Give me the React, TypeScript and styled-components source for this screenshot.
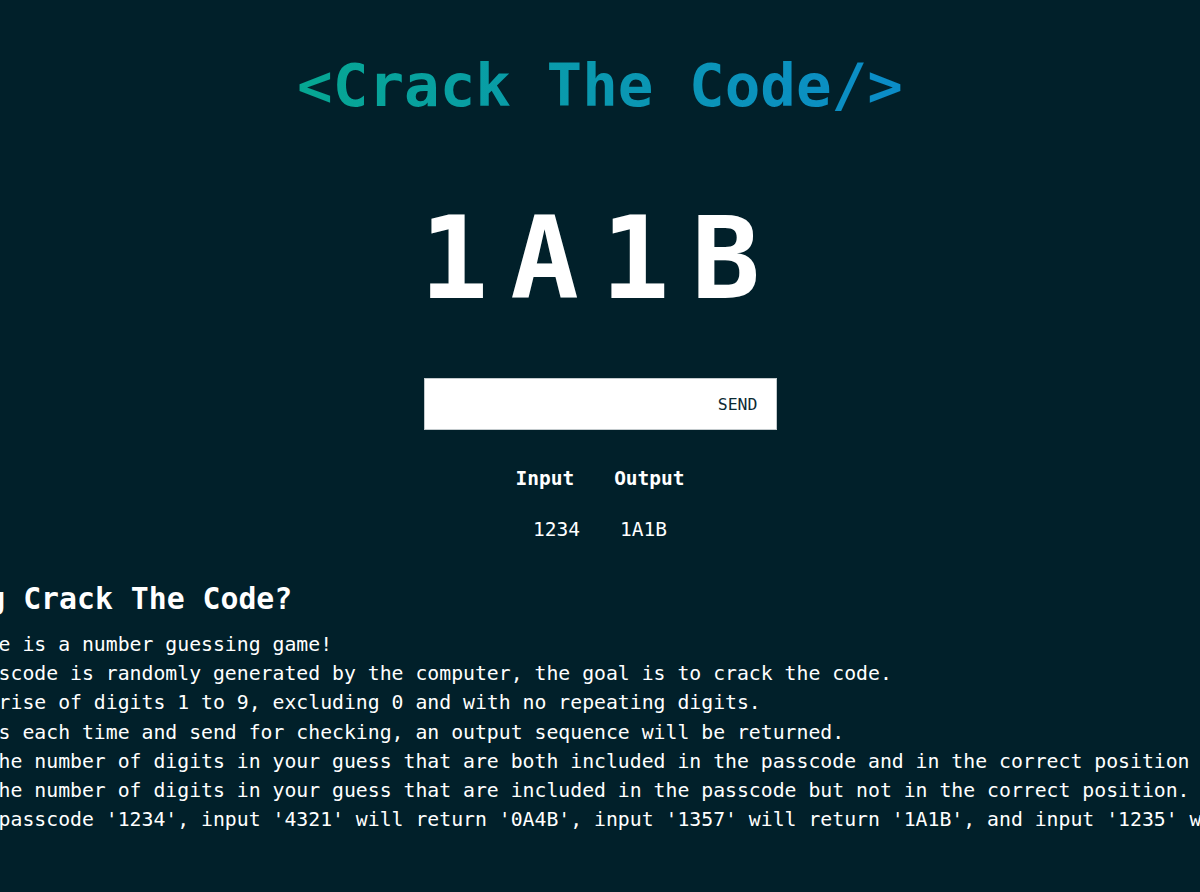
import React, { useState } from "react";
import styled, { createGlobalStyle } from "styled-components";

const GlobalStyle = createGlobalStyle`
  html, body {
    margin: 0;
    padding: 0;
    background: #01202a;
    overflow: hidden;
  }
  body {
    font-family: "DejaVu Sans Mono", "Liberation Mono", monospace;
    color: #ffffff;
  }
`;

const Page = styled.main`
  display: flex;
  flex-direction: column;
  align-items: center;
  padding-top: 51px;
  min-height: 892px;
  box-sizing: border-box;
`;

const Title = styled.h1`
  margin: 0;
  font-size: 59.2px;
  line-height: 70px;
  font-weight: 700;
  background: linear-gradient(90deg, #06a792 0%, #0a98b0 50%, #0b8cc8 100%);
  -webkit-background-clip: text;
  background-clip: text;
  color: transparent;
  white-space: nowrap;
`;

const Result = styled.div`
  margin-top: 81px;
  padding-left: 2px;
  font-size: 114px;
  line-height: 1;
  font-weight: 700;
  letter-spacing: 22px;
  color: #ffffff;
`;

const Form = styled.form`
  margin-top: 62px;
  display: flex;
  width: 353px;
  height: 52px;
  box-sizing: border-box;
  background: #ffffff;
  border: 1px solid #c3cacd;
`;

const Field = styled.input`
  flex: 1;
  min-width: 0;
  border: none;
  outline: none;
  background: transparent;
  padding: 0 14px;
  font-family: inherit;
  font-size: 17px;
  color: #01202a;
`;

const SendButton = styled.button`
  border: none;
  background: transparent;
  padding: 0 18px 0 10px;
  font-family: inherit;
  font-size: 16.5px;
  color: #0c2a33;
  cursor: pointer;
`;

const History = styled.div`
  margin-top: 34px;
  display: flex;
  flex-direction: column;
  align-items: center;
  gap: 21px;
`;

const HistoryRow = styled.div<{ $head?: boolean }>`
  display: flex;
  gap: 40px;
  font-size: 19.5px;
  line-height: 30px;
  font-weight: ${(p) => (p.$head ? 700 : 400)};
`;

const Rules = styled.section`
  margin-top: 36px;
  width: max-content;
  white-space: nowrap;
`;

const RulesHeading = styled.h2`
  margin: 0;
  font-size: 29.8px;
  line-height: 36px;
  font-weight: 700;
`;

const RuleList = styled.div`
  margin-top: 13px;
  display: flex;
  flex-direction: column;
`;

const Rule = styled.p`
  margin: 0;
  font-size: 19.8px;
  line-height: 29.2px;
`;

const rules = [
  "Crack The Code is a number guessing game!",
  "A 4-digit passcode is randomly generated by the computer, the goal is to crack the code.",
  "The code comprise of digits 1 to 9, excluding 0 and with no repeating digits.",
  "Enter 4 digits each time and send for checking, an output sequence will be returned.",
  "A indicates the number of digits in your guess that are both included in the passcode and in the correct position",
  "B indicates the number of digits in your guess that are included in the passcode but not in the correct position.",
  "For example, passcode '1234', input '4321' will return '0A4B', input '1357' will return '1A1B', and input '1235' will give 3A0B",
];

export default function App() {
  const [value, setValue] = useState("");
  return (
    <>
      <GlobalStyle />
      <Page>
        <Title>&lt;Crack The Code/&gt;</Title>
        <Result>1A1B</Result>
        <Form onSubmit={(e) => e.preventDefault()}>
          <Field value={value} onChange={(e) => setValue(e.target.value)} />
          <SendButton type="submit">SEND</SendButton>
        </Form>
        <History>
          <HistoryRow $head>
            <span>Input</span>
            <span>Output</span>
          </HistoryRow>
          <HistoryRow>
            <span>1234</span>
            <span>1A1B</span>
          </HistoryRow>
        </History>
        <Rules>
          <RulesHeading>Exploring Crack The Code?</RulesHeading>
          <RuleList>
            {rules.map((r) => (
              <Rule key={r}>{r}</Rule>
            ))}
          </RuleList>
        </Rules>
      </Page>
    </>
  );
}
